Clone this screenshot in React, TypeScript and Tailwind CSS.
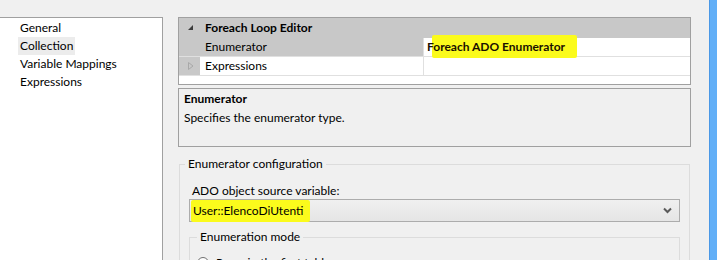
import React from 'react';

const font = "font-['Segoe_UI','Lato','Liberation_Sans',sans-serif]";

const NAV = ['General', 'Collection', 'Variable Mappings', 'Expressions'];

const Marker: React.FC<{ className: string }> = ({ className }) => (
  <span className={`absolute -z-0 bg-[#fbfb1c] rounded-[2px] ${className}`} />
);

export default function App() {
  return (
    <div className={`${font} w-[717px] h-[260px] overflow-hidden bg-[#f0f0f0] text-[12px] text-black flex pt-[17px]`}>
      {/* page list */}
      <div className="w-[163px] shrink-0 bg-white border-t border-r border-[#a0a0a0] pt-[1px]">
        {NAV.map(n => (
          <div key={n} className="h-[18px] flex items-center pl-[18px]">
            <span className={`px-[2px] leading-[18px] ${n === 'Collection' ? 'bg-[#ececec]' : ''}`}>{n}</span>
          </div>
        ))}
      </div>

      <div className="w-[513px] ml-[15px] shrink-0 flex flex-col">
        {/* property grid */}
        <div className="shrink-0 border border-[#a0a0a0] bg-white">
          <div className="h-[20px] bg-[#c8c8c8] flex items-center">
            <div className="w-[26px] flex justify-center pr-[3px]">
              <svg width="6" height="6" viewBox="0 0 6 6"><polygon points="5,0 5,5 0,5" fill="#3c3c3c" /></svg>
            </div>
            <span className="font-bold">Foreach Loop Editor</span>
          </div>
          <div className="h-[19px] flex border-b border-[#e0e0e0]">
            <div className="w-[244px] bg-[#c8c8c8] flex items-center pl-[26px]">Enumerator</div>
            <div className="flex-1 bg-white border-l border-[#e0e0e0] flex items-center pl-[3px]">
              <span className="relative font-bold text-[#1a1000]">
                <Marker className="left-[5px] right-[-12px] top-[-3px] bottom-[-2px]" />
                <span className="relative">Foreach ADO Enumerator</span>
              </span>
            </div>
          </div>
          <div className="h-[19px] flex border-b border-[#e0e0e0]">
            <div className="w-[21px] bg-[#c8c8c8] flex items-center justify-center pl-[2px]">
              <svg width="6" height="8" viewBox="0 0 6 8"><polygon points="0.5,0.5 5,4 0.5,7.5" fill="none" stroke="#a8a8a8" /></svg>
            </div>
            <div className="w-[223px] flex items-center pl-[5px]">Expressions</div>
            <div className="flex-1 border-l border-[#e0e0e0]" />
          </div>
          <div className="h-[8px]" />
        </div>

        {/* description */}
        <div className="shrink-0 mt-[3px] h-[59px] border border-[#a0a0a0] px-[5px] pt-[1px]">
          <div className="font-bold leading-[18px]">Enumerator</div>
          <div className="leading-[19px]">Specifies the enumerator type.</div>
        </div>

        {/* enumerator configuration */}
        <fieldset className="shrink-0 mt-[9px] mx-[1px] border border-[#dcdcdc] h-[140px]">
          <legend className="ml-[5px] px-[3px] leading-[16px]">Enumerator configuration</legend>
          <div className="px-[9px]">
            <div className="pl-[3px] mt-[11px] leading-[16px]">ADO object source variable:</div>
            <div className="h-[23px] border border-[#acacac] bg-gradient-to-b from-[#f0f0f0] to-[#e5e5e5] flex items-center justify-between pl-[3px] pr-[7px]">
              <span className="relative">
                <Marker className="left-[-2px] right-[-6px] top-[-2px] bottom-[-2px]" />
                <span className="relative">User::ElencoDiUtenti</span>
              </span>
              <svg width="9" height="7" viewBox="0 0 9 7">
                <polyline points="1,1.5 4.5,5 8,1.5" fill="none" stroke="#5a5a5a" strokeWidth="2" />
              </svg>
            </div>
            <fieldset className="mt-[7px] border border-[#dcdcdc] h-[60px]">
              <legend className="ml-[7px] px-[3px] leading-[16px]">Enumeration mode</legend>
              <div className="flex items-center gap-[7px] mt-[9px] pl-[7px]">
                <span className="w-[12px] h-[12px] rounded-full border border-[#707070] bg-white flex items-center justify-center">
                  <span className="w-[6px] h-[6px] rounded-full bg-[#333]" />
                </span>
                <span>Rows in the first table</span>
              </div>
            </fieldset>
          </div>
        </fieldset>
      </div>

      <div className="ml-auto w-[8px] h-[260px] -mt-[17px] bg-[#62aff7] border-l border-[#4a98e6]" />
    </div>
  );
}
